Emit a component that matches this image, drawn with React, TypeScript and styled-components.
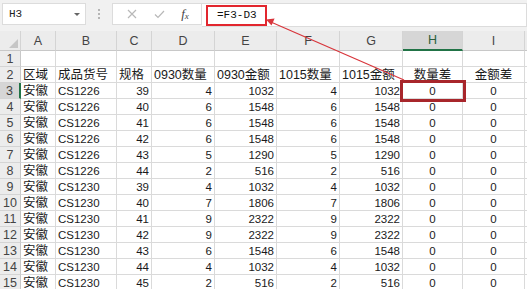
import styled, { createGlobalStyle } from "styled-components";

const GlobalStyle = createGlobalStyle`
  body {
    margin: 0;
    background: #ffffff;
    font-family: "Liberation Sans", "Noto Sans CJK SC", sans-serif;
  }
`;

const COLS = ["A", "B", "C", "D", "E", "F", "G", "H", "I", ""];
const WIDTHS = "21px 35px 61px 35px 63px 62px 63px 63px 60px 62px 1fr";

type Align = "left" | "right" | "center";

// per column alignment for data rows
const ALIGN: Align[] = ["left", "left", "right", "right", "right", "right", "right", "center", "center", "left"];

const DATA: (string | number)[][] = [
  ["CS1226", 39, 4, 1032, 4, 1032],
  ["CS1226", 40, 6, 1548, 6, 1548],
  ["CS1226", 41, 6, 1548, 6, 1548],
  ["CS1226", 42, 6, 1548, 6, 1548],
  ["CS1226", 43, 5, 1290, 5, 1290],
  ["CS1226", 44, 2, 516, 2, 516],
  ["CS1230", 39, 4, 1032, 4, 1032],
  ["CS1230", 40, 7, 1806, 7, 1806],
  ["CS1230", 41, 9, 2322, 9, 2322],
  ["CS1230", 42, 9, 2322, 9, 2322],
  ["CS1230", 43, 6, 1548, 6, 1548],
  ["CS1230", 44, 4, 1032, 4, 1032],
  ["CS1230", 45, 2, 516, 2, 516],
];

const TITLES: { text: string; align: Align }[] = [
  { text: "区域", align: "left" },
  { text: "成品货号", align: "left" },
  { text: "规格", align: "left" },
  { text: "0930数量", align: "left" },
  { text: "0930金额", align: "left" },
  { text: "1015数量", align: "left" },
  { text: "1015金额", align: "left" },
  { text: "数量差", align: "center" },
  { text: "金额差", align: "center" },
  { text: "", align: "left" },
];

const Frame = styled.div`
  position: relative;
  width: 527px;
  height: 289px;
  overflow: hidden;
  background: #ffffff;
`;

const Toolbar = styled.div`
  display: flex;
  align-items: flex-start;
  height: 31px;
  padding-top: 3px;
  box-sizing: border-box;
  background: #f1f1f1;
`;

const NameBox = styled.div`
  display: flex;
  align-items: center;
  justify-content: space-between;
  width: 84px;
  height: 22px;
  margin-left: 2px;
  padding: 0 5px 0 6px;
  box-sizing: border-box;
  background: #ffffff;
  border: 1px solid #dcdcdc;
  font-family: "Liberation Mono", monospace;
  font-size: 11px;
  color: #222;
`;

const Caret = styled.span`
  width: 0;
  height: 0;
  border-left: 3px solid transparent;
  border-right: 3px solid transparent;
  border-top: 3px solid #666;
`;

const Dots = styled.div`
  display: flex;
  flex-direction: column;
  gap: 2px;
  margin: 6px 12px 0 12px;
  span {
    width: 2px;
    height: 2px;
    background: #b5b5b5;
  }
`;

const FuncBox = styled.div`
  display: flex;
  align-items: center;
  justify-content: space-around;
  width: 90px;
  height: 22px;
  padding: 0 4px 0 6px;
  box-sizing: border-box;
  background: #ffffff;
  border: 1px solid #dcdcdc;
`;

const Fx = styled.span`
  font-family: "Liberation Serif", serif;
  font-style: italic;
  font-size: 13px;
  color: #444;
  sub {
    font-size: 9px;
    vertical-align: -1px;
  }
`;

const FormulaInput = styled.div`
  flex: 1;
  display: flex;
  align-items: center;
  height: 22px;
  padding-left: 4px;
  background: #ffffff;
  border: 1px solid #dcdcdc;
  border-left: none;
`;

const FormulaMark = styled.span`
  display: flex;
  align-items: center;
  height: 21px;
  padding: 0 8px 0 9px;
  box-sizing: border-box;
  border: 2px solid #e2262e;
  font-family: "Liberation Mono", monospace;
  font-size: 11px;
  color: #111;
`;

const Grid = styled.div`
  display: grid;
  grid-template-columns: ${WIDTHS};
  grid-template-rows: 20px;
  grid-auto-rows: 16px;
`;

const Corner = styled.div`
  position: relative;
  background: #ececec;
  border-right: 1px solid #d4d4d4;
  border-bottom: 1px solid #c8c8c8;
  &::after {
    content: "";
    position: absolute;
    right: 2px;
    bottom: 2px;
    border-left: 9px solid transparent;
    border-bottom: 9px solid #c6c6c6;
  }
`;

const ColHead = styled.div<{ $active?: boolean }>`
  display: flex;
  align-items: center;
  justify-content: center;
  box-sizing: border-box;
  background: ${(p) => (p.$active ? "#d6d6d6" : "#ececec")};
  border-right: 1px solid #d4d4d4;
  border-bottom: ${(p) => (p.$active ? "2px solid #217346" : "1px solid #c8c8c8")};
  font-size: 12.5px;
  line-height: 14px;
  color: ${(p) => (p.$active ? "#2a5e3c" : "#444")};
`;

const RowHead = styled.div<{ $active?: boolean }>`
  display: flex;
  align-items: center;
  justify-content: center;
  box-sizing: border-box;
  background: ${(p) => (p.$active ? "#d6d6d6" : "#ececec")};
  border-right: ${(p) => (p.$active ? "2px solid #217346" : "1px solid #c8c8c8")};
  border-bottom: 1px solid #d4d4d4;
  font-size: 12.5px;
  line-height: 14px;
  color: #444;
`;

const Cell = styled.div<{ $align: Align; $cjk?: boolean; $marked?: boolean }>`
  position: relative;
  display: flex;
  align-items: center;
  justify-content: ${(p) =>
    p.$align === "right" ? "flex-end" : p.$align === "center" ? "center" : "flex-start"};
  padding: 0 2px;
  box-sizing: border-box;
  border-right: 1px solid #dadada;
  border-bottom: 1px solid #dadada;
  white-space: nowrap;
  font-family: "Liberation Sans", "Noto Sans CJK SC", sans-serif;
  font-size: ${(p) => (p.$cjk ? "12.5px" : "11.5px")};
  line-height: 14px;
  color: #1a1a1a;
  z-index: ${(p) => (p.$marked ? 2 : "auto")};
  outline: ${(p) => (p.$marked ? "3px solid #a8262b" : "none")};
`;

const Arrow = styled.svg`
  position: absolute;
  left: 0;
  top: 0;
  pointer-events: none;
  z-index: 5;
`;

function Cross() {
  return (
    <svg width="10" height="10" viewBox="0 0 10 10">
      <path d="M1 1 L9 9 M9 1 L1 9" stroke="#b8b8b8" strokeWidth="1.2" />
    </svg>
  );
}

function Check() {
  return (
    <svg width="11" height="9" viewBox="0 0 11 9">
      <path d="M1 4.5 L4 7.5 L10 1" stroke="#b8b8b8" strokeWidth="1.2" fill="none" />
    </svg>
  );
}

export default function App() {
  const rows: (string | number)[][] = [
    COLS.map(() => ""),
    TITLES.map((t) => t.text),
    ...DATA.map((d) => ["安徽", ...d, 0, 0, ""]),
  ];

  return (
    <Frame>
      <GlobalStyle />
      <Toolbar>
        <NameBox>
          H3
          <Caret />
        </NameBox>
        <Dots>
          <span />
          <span />
          <span />
        </Dots>
        <FuncBox>
          <Cross />
          <Check />
          <Fx>
            f<sub>x</sub>
          </Fx>
        </FuncBox>
        <FormulaInput>
          <FormulaMark>=F3-D3</FormulaMark>
        </FormulaInput>
      </Toolbar>

      <Grid>
        <Corner />
        {COLS.map((c, i) => (
          <ColHead key={i} $active={c === "H"}>
            {c}
          </ColHead>
        ))}

        {rows.map((row, r) => {
          const num = r + 1;
          return [
            <RowHead key={`h${num}`} $active={num === 3}>
              {num}
            </RowHead>,
            ...row.map((v, c) => {
              const isTitle = num === 2;
              const align = isTitle ? TITLES[c].align : ALIGN[c];
              const cjk = isTitle || (c === 0 && v !== "");
              return (
                <Cell
                  key={`${num}-${c}`}
                  $align={align}
                  $cjk={cjk}
                  $marked={num === 3 && c === 7}
                >
                  {v}
                </Cell>
              );
            }),
          ];
        })}
      </Grid>

      <Arrow width="527" height="289" viewBox="0 0 527 289">
        <line x1="404" y1="80" x2="272" y2="22.5" stroke="#d8353b" strokeWidth="1.2" />
        <polygon points="266,19.5 271.5,25.6 274.6,18.5" fill="#d8353b" />
      </Arrow>
    </Frame>
  );
}
